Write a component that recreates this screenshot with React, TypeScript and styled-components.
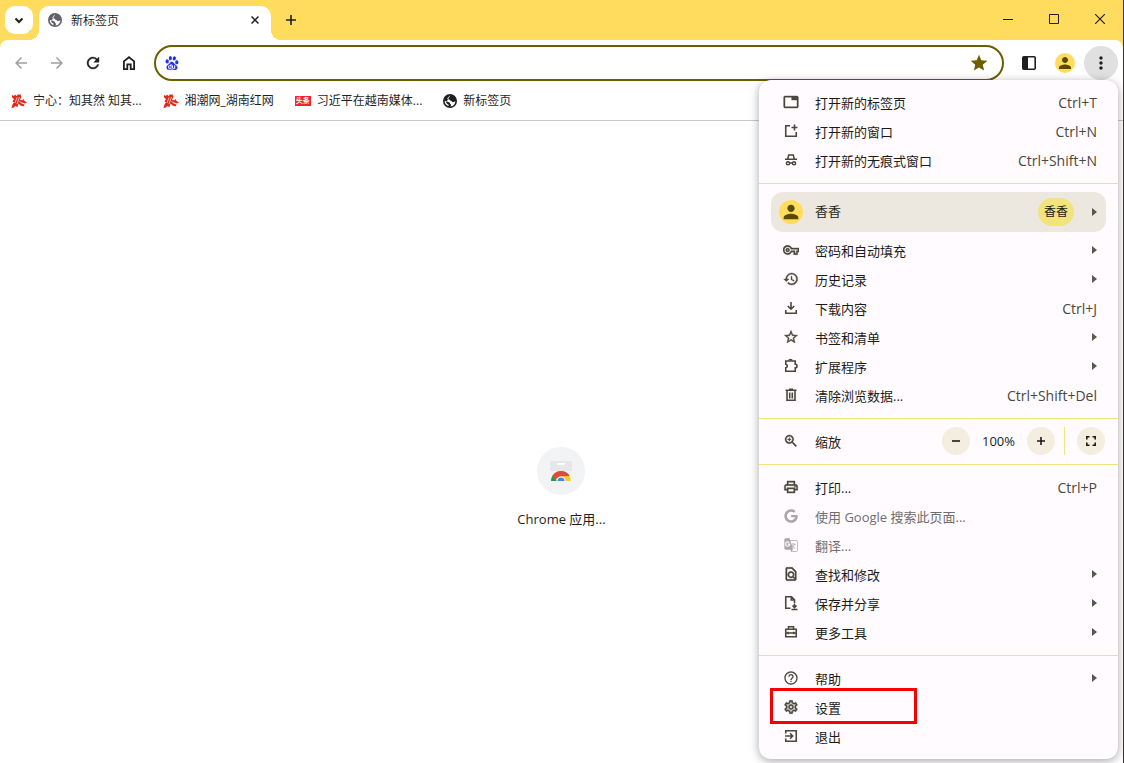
import React from "react";
import styled, { createGlobalStyle } from "styled-components";
import {
  MdArrowBack,
  MdArrowForward,
  MdRefresh,
  MdStar,
  MdMoreVert,
  MdPerson,
  MdTab,
  MdHistory,
  MdStarBorder,
  MdZoomIn,
  MdOutlinePrint,
  MdOutlineGTranslate,
  MdOutlineFindInPage,
  MdHelpOutline,
  MdOutlineSettings,
  MdOutlineVpnKey,
} from "react-icons/md";
import { FaGoogle } from "react-icons/fa";
import { SiBaidu } from "react-icons/si";

const GlobalStyle = createGlobalStyle`
  * { box-sizing: border-box; }
  body {
    margin: 0;
    background: #fff;
    font-family: "Open Sans", "Noto Sans CJK SC", sans-serif;
    color: #1f1f1f;
  }
  button, input { font: inherit; color: inherit; }
  button { border: 0; padding: 0; background: none; cursor: default; }
  svg { display: block; flex: none; }
  svg path[fill="none"] { stroke: none; }
`;

/* ---------- window ---------- */

const Window = styled.div`
  position: relative;
  display: flex;
  flex-direction: column;
  min-height: 100vh;
  border-right: 1px solid #3a3431;
  background: #fff;
`;

const TabStrip = styled.header`
  display: flex;
  align-items: flex-end;
  height: 40px;
  padding-left: 5px;
  background: #ffdc5e;
`;

const TabSearch = styled.button`
  display: grid;
  place-items: center;
  width: 28px;
  height: 28px;
  margin: 0 6px 6px 0;
  border-radius: 10px;
  background: #fff;
`;

const Tab = styled.div`
  position: relative;
  display: flex;
  align-items: center;
  gap: 9px;
  width: 232px;
  height: 34px;
  padding: 0 8px 6px 9px;
  border-radius: 10px 10px 0 0;
  background: #fff;
  font-size: 12px;

  &::before,
  &::after {
    content: "";
    position: absolute;
    bottom: 0;
    width: 10px;
    height: 10px;
  }
  &::before {
    left: -10px;
    background: radial-gradient(circle at 0 0, #ffdc5e 10px, #fff 10px);
  }
  &::after {
    right: -10px;
    background: radial-gradient(circle at 100% 0, #ffdc5e 10px, #fff 10px);
  }
`;

const TabTitle = styled.span`
  flex: 1;
  padding-top: 2px;
  line-height: 18px;
`;

const SmallButton = styled.button`
  display: grid;
  place-items: center;
  width: 16px;
  height: 16px;
`;

const NewTab = styled.button`
  display: grid;
  place-items: center;
  width: 28px;
  height: 28px;
  margin: 0 0 6px 6px;
`;

const WindowControls = styled.div`
  display: flex;
  align-self: stretch;
  margin-left: auto;
`;

const WindowButton = styled.button`
  display: grid;
  place-items: center;
  width: 46px;
  height: 38px;
`;

/* ---------- toolbar ---------- */

const ToolbarBack = styled.div`
  background: #ffdc5e;
`;

const Toolbar = styled.nav`
  display: flex;
  align-items: center;
  height: 46px;
  padding: 0 5px 0 3px;
  border-radius: 8px 8px 0 0;
  background: #fff;
`;

const ToolButton = styled.button<{ $dim?: boolean }>`
  display: grid;
  place-items: center;
  flex: none;
  width: 36px;
  height: 34px;
  color: ${(p) => (p.$dim ? "#a0a0a2" : "#1f1f1f")};
`;

const Omnibox = styled.form`
  display: flex;
  align-items: center;
  flex: 1;
  height: 36px;
  margin: 0 7px;
  padding: 0 13px 0 9px;
  border: 2px solid #6b5f00;
  border-radius: 18px;
  color: #6b5f00;
`;

const Address = styled.input`
  flex: 1;
  min-width: 0;
  height: 28px;
  padding: 0 8px;
  border: 0;
  outline: 0;
  background: transparent;
  font-size: 14px;
`;

const Avatar = styled.span<{ $size: number }>`
  display: grid;
  place-items: center;
  flex: none;
  width: ${(p) => p.$size}px;
  height: ${(p) => p.$size}px;
  border-radius: 50%;
  background: #ffdc5e;
  color: #594a00;
`;

const MenuToggle = styled(ToolButton)`
  width: 34px;
  margin-left: 1px;
  border-radius: 50%;
  background: #e0e0e0;
`;

/* ---------- bookmarks ---------- */

const Bookmarks = styled.nav`
  display: flex;
  align-items: center;
  gap: 21px;
  height: 35px;
  padding: 0 11px 4px;
  border-bottom: 1px solid #c8c8c8;
`;

const Bookmark = styled.a`
  display: flex;
  align-items: center;
  gap: 6px;
  color: #1f1f1f;
  font-size: 12px;
  line-height: 16px;
  text-decoration: none;
  white-space: nowrap;
`;

const HeadlineBadge = styled.span`
  width: 16px;
  height: 10px;
  background: #f5222d;
  color: #fff;
  font-size: 7px;
  font-weight: 700;
  line-height: 10px;
  text-align: center;
`;

/* ---------- page ---------- */

const Page = styled.main`
  display: flex;
  flex: 1;
  flex-direction: column;
  align-items: center;
  padding-top: 326px;
`;

const Shortcut = styled.a`
  display: flex;
  flex-direction: column;
  align-items: center;
  gap: 16px;
  color: #1f1f1f;
  font-size: 13px;
  line-height: 16px;
  text-decoration: none;
`;

const ShortcutDisc = styled.span`
  display: grid;
  place-items: center;
  width: 48px;
  height: 48px;
  border-radius: 50%;
  background: #f1f3f4;
`;

/* ---------- menu ---------- */

const Menu = styled.div`
  position: absolute;
  top: 80px;
  right: 5px;
  width: 359px;
  border-radius: 12px;
  background: #fffbff;
  box-shadow: 0 2px 10px rgba(0, 0, 0, 0.35);
  color: #1d1b16;
  font-size: 13px;
`;

const Section = styled.div`
  padding: 8px 0;

  & + & {
    border-top: 1px solid #f2e47c;
  }
`;

const Label = styled.span`
  flex: 1;
  line-height: 20px;
`;

const Keys = styled.span`
  color: #4a473c;
  font-size: 14px;
  line-height: 20px;
`;

const Item = styled.button`
  position: relative;
  display: flex;
  align-items: center;
  gap: 16px;
  width: 100%;
  height: 29px;
  padding: 0 21px 1px 24px;
  text-align: left;

  &:disabled {
    color: #6f6d70;
  }

  ${Label}, ${Keys} {
    padding-top: 2px;
  }
`;

const ItemIcon = styled.span<{ $dim?: boolean; $bold?: boolean }>`
  display: grid;
  place-items: center;
  width: 16px;
  height: 16px;
  color: ${(p) => (p.$dim ? "#a9a7a8" : "#4a473c")};

  & > svg {
    ${(p) => (p.$bold ? "stroke-width: 0.6px;" : "")}
  }
`;

const Profile = styled.button`
  display: flex;
  align-items: center;
  width: calc(100% - 24px);
  height: 40px;
  margin: 0 12px 4px;
  padding: 0 9px 0 8px;
  gap: 12px;
  border-radius: 12px;
  background: #ece8df;
  text-align: left;

  ${Label} {
    padding-bottom: 2px;
  }
`;

const ProfileBadge = styled.span`
  margin-right: 6px;
  padding: 0 6px;
  border-radius: 14px;
  background: #f2e47c;
  font-size: 12px;
  line-height: 28px;
`;

const ZoomRow = styled.div`
  display: flex;
  align-items: center;
  height: 47px;
  padding: 0 13px 1px 24px;
  border: solid #f2e47c;
  border-width: 1px 0;
`;

const ZoomLabel = styled(Label)`
  padding: 2px 0 0 16px;
`;

const RoundButton = styled.button`
  display: grid;
  place-items: center;
  width: 28px;
  height: 28px;
  border-radius: 50%;
  background: #f4eee0;
`;

const ZoomValue = styled.output`
  width: 57px;
  line-height: 20px;
  text-align: center;
`;

const ZoomRule = styled.span`
  width: 1px;
  height: 28px;
  margin: 0 12px 0 9px;
  background: #f2e47c;
`;

const Highlight = styled.span`
  position: absolute;
  top: -5px;
  left: 11px;
  width: 147px;
  height: 36px;
  border: 3px solid #f80000;
`;

/* ---------- drawings ---------- */

const Globe = ({ color }: { color: string }) => (
  <svg width="14" height="14" viewBox="0 0 14 14" aria-hidden>
    <circle cx="7" cy="7" r="7" fill={color} />
    <path
      d="M7.2 1.6C5.8 2 5.9 3.3 5 3.7 4 4 4.3 5.4 5.6 5.3 6.8 5.2 6.6 6.6 7.8 6.7 9.1 6.7 8.9 8.2 10 8.2 11.2 8.2 11.5 7.3 12.4 7.3A5.5 5.5 0 0 1 7.3 12.4C8.3 11.8 8.3 10.8 7.6 10.3 6.6 9.8 7.6 9 6.4 8.5 5 8 4 7.1 1.7 7.1A5.4 5.4 0 0 0 5.5 12.2L5.5 10.6C4 10.3 4.2 9.2 3 8.8"
      fill="#fff"
    />
  </svg>
);

const RedNet = () => (
  <svg width="16" height="16" viewBox="0 0 16 16" fill="#dc2a1c" aria-hidden>
    <path d="M1 2 3 3 4 1.5 5.5 3 7 1.5 9.5 1.5 10.5 4 9 6.5 11 7.5 12.5 6 13.5 8 16 9.5 14 10.5 11.5 9.5 10.5 10.5 13.500 11.5 12.5 13.5 9.5 12.5 7.500 10.5 6.5 14 4 13 3 14.500 0.5 15 1.500 11.5 3 9.5 1.5 8.500 3 6 1 4.500Z" />
    <path
      d="M6 4.500 4 10M8.500 4 6 11M8.500 8.500 11 10"
      stroke="#fff"
      strokeWidth="0.7"
    />
  </svg>
);

const WebStore = () => (
  <svg width="24" height="24" viewBox="0 0 24 24" aria-hidden>
    <path d="M1 2h22v10H1z" fill="#e6e7e8" />
    <rect x="8" y="4" width="8" height="2" rx="1" fill="#fff" />
    <path d="M2 22a10 10 0 0 1 20 0z" fill="#fbc835" />
    <path d="M2 22a10 10 0 0 1 2-6l4 6z" fill="#1a9e55" />
    <path d="M3.3 17A10 10 0 0 1 20.7 17H12L6.5 20z" fill="#dd4b3e" />
    <path d="M7.5 22a4.5 4.5 0 0 1 9 0z" fill="#fff" />
    <path d="M8.5 22a3.5 3.5 0 0 1 7 0z" fill="#4285f4" />
  </svg>
);

const Line = ({
  children,
  size = 16,
  weight = 1.6,
}: {
  children: React.ReactNode;
  size?: number;
  weight?: number;
}) => (
  <svg
    width={size}
    height={size}
    viewBox={`0 0 ${size} ${size}`}
    fill="none"
    stroke="currentColor"
    strokeWidth={weight}
    aria-hidden
  >
    {children}
  </svg>
);

const NewWindowIcon = () => (
  <Line>
    <path d="M7 2.75H2.75v10.5h10.5V9M11.5 1.5v6M8.5 4.5h6" />
  </Line>
);

const IncognitoIcon = () => (
  <Line weight={1.5}>
    <path d="M2 7.25h12M4.7 7 5.7 3h4.6l1 4" />
    <circle cx="5" cy="11.25" r="1.6" />
    <circle cx="11" cy="11.25" r="1.6" />
    <path d="M6.5 11h3" />
  </Line>
);

const DownloadIcon = () => (
  <Line>
    <path d="M8 2v7M4.8 6 8 9.2 11.2 6M2.75 10v3.25h10.5V10" />
  </Line>
);

const ExtensionIcon = () => (
  <Line>
    <path d="M2.75 3h9.5v3.25c2.4 0 2.4 3.5 0 3.5v3.5h-9.5V9.8c2-.4 2-3.2 0-3.6z" />
    <path d="M6 2.7c0-1.6 3-1.6 3 0" />
  </Line>
);

const TrashIcon = () => (
  <Line>
    <path d="M2.5 3.25h11M6 2.25h4M4 3.5v9.75h8V3.5M6.7 5.5v6M9.3 5.5v6" />
  </Line>
);

const SaveShareIcon = () => (
  <Line>
    <path d="M7.5 13.25H2.75V1.75H8.5l3 3V8M8.3 2v3h3M11.5 8.5v4M9.5 10.5l2 2 2-2M8.5 14.5h6" />
  </Line>
);

const ToolboxIcon = () => (
  <Line>
    <path d="M5.5 5V2.75h5V5M2.75 5.25h10.5v7.5H2.75zM2.5 9h11M5.3 7.8v2.4M10.7 7.8v2.4" />
  </Line>
);

const ExitIcon = () => (
  <Line>
    <path d="M2.75 5.5V2.75h10.5v10.5H2.75V10.5M2 8h7.5M7 5.3 9.7 8 7 10.7" />
  </Line>
);

const SubmenuArrow = () => (
  <svg width="5" height="8" viewBox="0 0 5 8" fill="#5a574e" aria-hidden>
    <path d="M0 0 5 4 0 8z" />
  </svg>
);

/* ---------- data ---------- */

type Entry = {
  icon: React.ReactNode;
  bold?: boolean;
  label: string;
  keys?: string;
  submenu?: boolean;
  disabled?: boolean;
  highlighted?: boolean;
};

const openItems: Entry[] = [
  { icon: <MdTab size={16} />, bold: true, label: "打开新的标签页", keys: "Ctrl+T" },
  { icon: <NewWindowIcon />, label: "打开新的窗口", keys: "Ctrl+N" },
  { icon: <IncognitoIcon />, label: "打开新的无痕式窗口", keys: "Ctrl+Shift+N" },
];

const dataItems: Entry[] = [
  { icon: <MdOutlineVpnKey size={16} />, bold: true, label: "密码和自动填充", submenu: true },
  { icon: <MdHistory size={16} />, bold: true, label: "历史记录", submenu: true },
  { icon: <DownloadIcon />, label: "下载内容", keys: "Ctrl+J" },
  { icon: <MdStarBorder size={16} />, bold: true, label: "书签和清单", submenu: true },
  { icon: <ExtensionIcon />, label: "扩展程序", submenu: true },
  { icon: <TrashIcon />, label: "清除浏览数据...", keys: "Ctrl+Shift+Del" },
];

const pageItems: Entry[] = [
  { icon: <MdOutlinePrint size={16} />, bold: true, label: "打印...", keys: "Ctrl+P" },
  { icon: <FaGoogle size={14} />, label: "使用 Google 搜索此页面...", disabled: true },
  { icon: <MdOutlineGTranslate size={16} />, label: "翻译...", disabled: true },
  { icon: <MdOutlineFindInPage size={16} />, bold: true, label: "查找和修改", submenu: true },
  { icon: <SaveShareIcon />, label: "保存并分享", submenu: true },
  { icon: <ToolboxIcon />, label: "更多工具", submenu: true },
];

const systemItems: Entry[] = [
  { icon: <MdHelpOutline size={16} />, label: "帮助", submenu: true },
  { icon: <MdOutlineSettings size={16} />, bold: true, label: "设置", highlighted: true },
  { icon: <ExitIcon />, label: "退出" },
];

const Items = ({ entries }: { entries: Entry[] }) => (
  <>
    {entries.map((e) => (
      <Item key={e.label} role="menuitem" disabled={e.disabled}>
        <ItemIcon $dim={e.disabled} $bold={e.bold}>
          {e.icon}
        </ItemIcon>
        <Label>{e.label}</Label>
        {e.keys && <Keys>{e.keys}</Keys>}
        {e.submenu && <SubmenuArrow />}
        {e.highlighted && <Highlight aria-hidden />}
      </Item>
    ))}
  </>
);

export default function App() {
  return (
    <>
      <GlobalStyle />
      <Window>
        <TabStrip>
          <TabSearch aria-label="搜索标签页">
            <Line size={10} weight={2}>
              <path d="M1.5 3.5 5 7l3.5-3.5" />
            </Line>
          </TabSearch>
          <Tab>
            <Globe color="#5f6368" />
            <TabTitle>新标签页</TabTitle>
            <SmallButton aria-label="关闭标签页">
              <Line size={8} weight={1.5}>
                <path d="M.5.5l7 7M7.5.5l-7 7" />
              </Line>
            </SmallButton>
          </Tab>
          <NewTab aria-label="打开新的标签页">
            <Line size={10} weight={1.6}>
              <path d="M5 0v10M0 5h10" />
            </Line>
          </NewTab>
          <WindowControls>
            <WindowButton aria-label="最小化">
              <Line size={10} weight={1}>
                <path d="M0 5.5h10" />
              </Line>
            </WindowButton>
            <WindowButton aria-label="最大化">
              <Line size={10} weight={1}>
                <path d="M.5.5h9v9h-9z" />
              </Line>
            </WindowButton>
            <WindowButton aria-label="关闭">
              <Line size={10} weight={1.2}>
                <path d="M0 0l10 10M10 0 0 10" />
              </Line>
            </WindowButton>
          </WindowControls>
        </TabStrip>

        <ToolbarBack>
          <Toolbar>
            <ToolButton $dim aria-label="后退">
              <MdArrowBack size={18} />
            </ToolButton>
            <ToolButton $dim aria-label="前进">
              <MdArrowForward size={18} />
            </ToolButton>
            <ToolButton aria-label="重新加载">
              <MdRefresh size={18} strokeWidth={0.5} />
            </ToolButton>
            <ToolButton aria-label="主页">
              <Line weight={1.8}>
                <path d="M2.9 6.4 8 2.2l5.1 4.2v7.7H9.7V9.3H6.3v4.8H2.9z" />
              </Line>
            </ToolButton>
            <Omnibox>
              <SiBaidu size={14} color="#2932e1" />
              <Address type="text" aria-label="地址和搜索栏" />
              <MdStar size={20} />
            </Omnibox>
            <ToolButton aria-label="侧边栏">
              <Line weight={1.6}>
                <rect x="1.8" y="1.8" width="12.4" height="12.4" rx="1" />
                <path d="M2 2h5v12H2z" fill="currentColor" stroke="none" />
              </Line>
            </ToolButton>
            <ToolButton aria-label="香香">
              <Avatar $size={20}>
                <MdPerson size={18} />
              </Avatar>
            </ToolButton>
            <MenuToggle aria-label="菜单" aria-expanded>
              <MdMoreVert size={20} />
            </MenuToggle>
          </Toolbar>
        </ToolbarBack>

        <Bookmarks>
          <Bookmark href="#zhiqiran">
            <RedNet />
            宁心：知其然 知其...
          </Bookmark>
          <Bookmark href="#rednet">
            <RedNet />
            湘潮网_湖南红网
          </Bookmark>
          <Bookmark href="#toutiao">
            <HeadlineBadge>头条</HeadlineBadge>
            习近平在越南媒体...
          </Bookmark>
          <Bookmark href="#newtab">
            <Globe color="#1f1f1f" />
            新标签页
          </Bookmark>
        </Bookmarks>

        <Page>
          <Shortcut href="#store">
            <ShortcutDisc>
              <WebStore />
            </ShortcutDisc>
            Chrome 应用...
          </Shortcut>
        </Page>

        <Menu role="menu">
          <Section>
            <Items entries={openItems} />
          </Section>
          <Section>
            <Profile role="menuitem">
              <Avatar $size={24}>
                <MdPerson size={22} />
              </Avatar>
              <Label>香香</Label>
              <ProfileBadge>香香</ProfileBadge>
              <SubmenuArrow />
            </Profile>
            <Items entries={dataItems} />
          </Section>
          <ZoomRow>
            <ItemIcon $bold>
              <MdZoomIn size={16} />
            </ItemIcon>
            <ZoomLabel>缩放</ZoomLabel>
            <RoundButton aria-label="缩小">
              <Line size={10} weight={1.6}>
                <path d="M1 5h8" />
              </Line>
            </RoundButton>
            <ZoomValue>100%</ZoomValue>
            <RoundButton aria-label="放大">
              <Line size={10} weight={1.6}>
                <path d="M1 5h8M5 1v8" />
              </Line>
            </RoundButton>
            <ZoomRule />
            <RoundButton aria-label="全屏">
              <Line size={10} weight={1.6}>
                <path d="M.8 3.5V.8h2.7M6.5.8h2.7v2.7M9.2 6.5v2.7H6.5M3.5 9.2H.8V6.5" />
              </Line>
            </RoundButton>
          </ZoomRow>
          <Section>
            <Items entries={pageItems} />
          </Section>
          <Section>
            <Items entries={systemItems} />
          </Section>
        </Menu>
      </Window>
    </>
  );
}
